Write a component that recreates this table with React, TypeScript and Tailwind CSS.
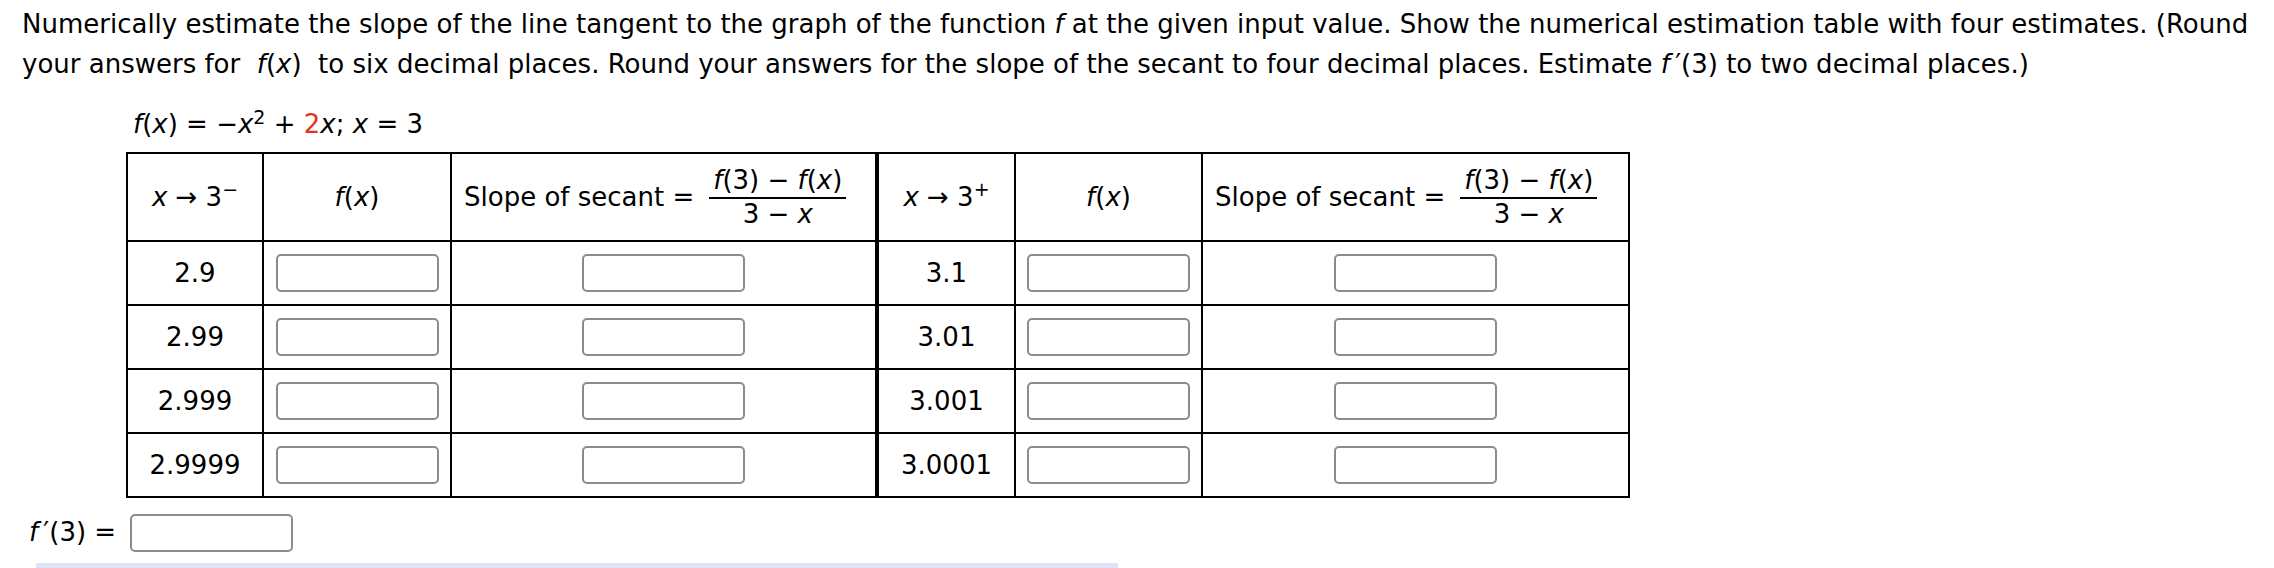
const BOX = "w-[163px] h-[38px] rounded-[5px] border-2 border-[#8c8c8c] bg-white";

const ROWS = [
  { left: "2.9", right: "3.1" },
  { left: "2.99", right: "3.01" },
  { left: "2.999", right: "3.001" },
  { left: "2.9999", right: "3.0001" },
];

function Fraction() {
  return (
    <span className="inline-flex flex-col items-center ml-[15px]">
      <span className="border-b-2 border-black px-[4px] leading-[33px]">
        <i>f</i>(3) − <i>f</i>(<i>x</i>)
      </span>
      <span className="leading-[31px]">
        3 − <i>x</i>
      </span>
    </span>
  );
}

function SlopeHeader() {
  return (
    <div className="bg-white flex items-center pl-[12px]">
      <span>Slope of secant =</span>
      <Fraction />
    </div>
  );
}

export default function App() {
  return (
    <div
      className="relative bg-white text-black w-[2274px] h-[568px] overflow-hidden text-[26px]"
      style={{ fontFamily: '"DejaVu Sans", Verdana, sans-serif' }}
    >
      <div className="pl-[22px] pt-[4px] leading-[40px] whitespace-nowrap">
        Numerically estimate the slope of the line tangent to the graph of the function <i>f</i> at the given input value. Show the numerical estimation table with four estimates. (Round
        <br />
        your answers for&nbsp; <i>f</i>(<i>x</i>)&nbsp; to six decimal places. Round your answers for the slope of the secant to four decimal places. Estimate <i>f</i>&thinsp;′(3) to two decimal places.)
      </div>

      <div className="pl-[126px]">
        <div className="ml-[7px] mt-[23px] leading-[34px]">
          <i>f</i>(<i>x</i>) = −<i>x</i>
          <sup className="text-[19px]">2</sup> + <span className="text-[#e2351f]">2</span>
          <i>x</i>; <i>x</i> = 3
        </div>

        <div className="mt-[11px] inline-grid grid-cols-[134px_186px_423px_137px_185px_425px] grid-rows-[86px_repeat(4,62px)] gap-[2px] p-[2px] bg-black">
          <div className="bg-white flex items-center justify-center">
            <span>
              <i>x</i> → 3<sup className="text-[19px]">−</sup>
            </span>
          </div>
          <div className="bg-white flex items-center justify-center">
            <span>
              <i>f</i>(<i>x</i>)
            </span>
          </div>
          <SlopeHeader />
          <div className="bg-white border-l-2 border-black flex items-center justify-center">
            <span>
              <i>x</i> → 3<sup className="text-[19px]">+</sup>
            </span>
          </div>
          <div className="bg-white flex items-center justify-center">
            <span>
              <i>f</i>(<i>x</i>)
            </span>
          </div>
          <SlopeHeader />

          {ROWS.map((r) => (
            <>
              <div key={r.left + "a"} className="bg-white flex items-center justify-center">
                {r.left}
              </div>
              <div key={r.left + "b"} className="bg-white flex items-center justify-center">
                <div className={BOX} />
              </div>
              <div key={r.left + "c"} className="bg-white flex items-center justify-center">
                <div className={BOX} />
              </div>
              <div key={r.left + "d"} className="bg-white border-l-2 border-black flex items-center justify-center">
                {r.right}
              </div>
              <div key={r.left + "e"} className="bg-white flex items-center justify-center">
                <div className={BOX} />
              </div>
              <div key={r.left + "f"} className="bg-white flex items-center justify-center">
                <div className={BOX} />
              </div>
            </>
          ))}
        </div>
      </div>

      <div className="flex items-center pl-[29px] mt-[15px]">
        <span>
          <i>f</i>&thinsp;′(3) =
        </span>
        <div className={"ml-[14px] " + BOX} />
      </div>

      <div className="absolute left-[36px] top-[563px] w-[1082px] h-[5px] bg-[#dbe5f6]" />
    </div>
  );
}
